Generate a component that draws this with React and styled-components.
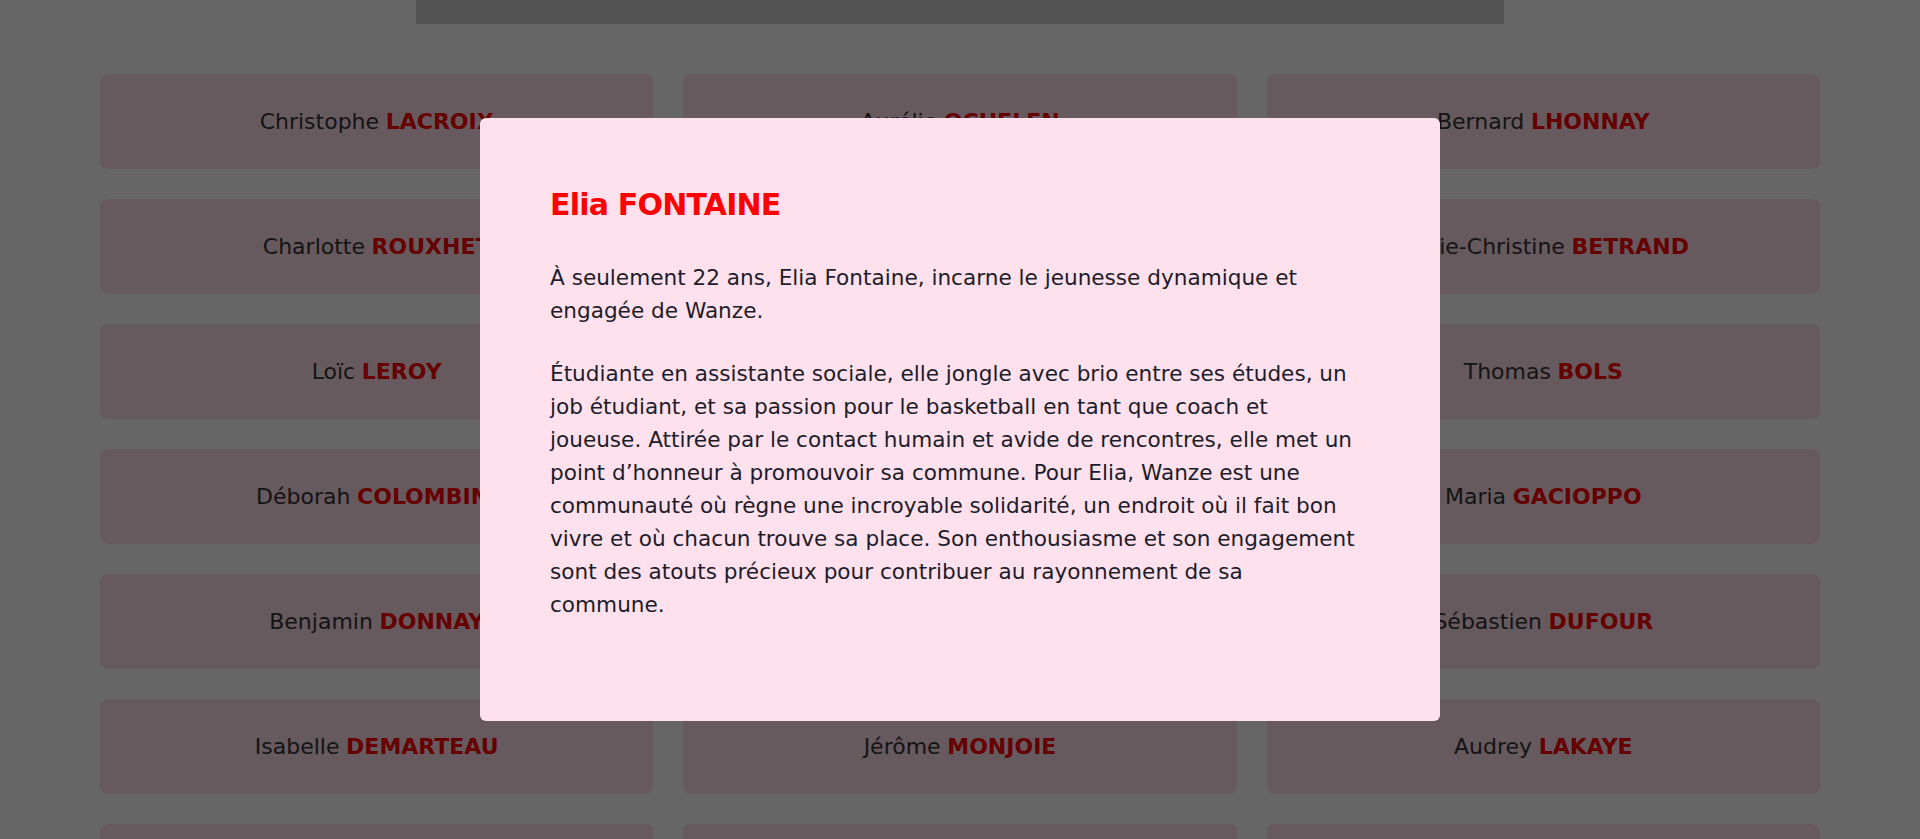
import React from 'react'
import styled, { createGlobalStyle } from 'styled-components'

const GlobalStyle = createGlobalStyle`
    * {
        box-sizing: border-box;
    }

    body {
        margin: 0;
        background: #ffffff;
        font-family: 'DejaVu Sans', 'Liberation Sans', sans-serif;
        overflow: hidden;
    }
`

const Page = styled.div`
    position: relative;
    min-height: 839px;
`

const Banner = styled.div`
    width: 1088px;
    height: 24px;
    margin: 0 auto;
    background: #cdcdcd;
`

const Grid = styled.div`
    display: grid;
    grid-template-columns: repeat(3, 1fr);
    grid-column-gap: 30px;
    grid-row-gap: 30px;
    padding: 50px 100px;
`

const Card = styled.div`
    display: flex;
    align-items: center;
    justify-content: center;
    height: 95px;
    border-radius: 8px;
    background: #ffe1ee;
    color: #333333;
    font-size: 22px;
    cursor: pointer;

    strong {
        margin-left: 0.3em;
        color: #ff0000;
        font-weight: 700;
    }
`

const Overlay = styled.div`
    position: fixed;
    inset: 0;
    display: flex;
    align-items: center;
    justify-content: center;
    background: rgba(0, 0, 0, 0.6);
`

const Modal = styled.div`
    width: 960px;
    padding: 70px;
    border-radius: 6px;
    background: #ffe1ee;
    color: #1c1c2a;

    h2 {
        margin: 0 0 39px;
        font-size: 30px;
        line-height: 34px;
        letter-spacing: -0.8px;
        font-weight: 700;
        color: #ff0000;
    }

    p {
        max-width: 810px;
        margin: 0 0 30px;
        font-size: 21.6px;
        line-height: 33px;
    }
`

const members = [
    ['Christophe', 'LACROIX'],
    ['Aurélie', 'OCHELEN'],
    ['Bernard', 'LHONNAY'],
    ['Charlotte', 'ROUXHET'],
    ['Elia', 'FONTAINE'],
    ['Marie-Christine', 'BETRAND'],
    ['Loïc', 'LEROY'],
    ['Eric', 'GUILLAUME'],
    ['Thomas', 'BOLS'],
    ['Déborah', 'COLOMBINI'],
    ['Julie', 'JAMAR'],
    ['Maria', 'GACIOPPO'],
    ['Benjamin', 'DONNAY'],
    ['Pierre', 'MATHIEU'],
    ['Sébastien', 'DUFOUR'],
    ['Isabelle', 'DEMARTEAU'],
    ['Jérôme', 'MONJOIE'],
    ['Audrey', 'LAKAYE'],
    ['Nathalie', 'DUBOIS'],
    ['Michel', 'RENARD'],
    ['Valérie', 'HENRARD'],
]

const App = () => {
    return (
        <Page>
            <GlobalStyle />
            <Banner />
            <Grid>
                {members.map(([first, last]) => (
                    <Card key={first + last}>
                        {first}
                        <strong>{last}</strong>
                    </Card>
                ))}
            </Grid>
            <Overlay>
                <Modal>
                    <h2>Elia FONTAINE</h2>
                    <p>
                        À seulement 22 ans, Elia Fontaine, incarne le jeunesse
                        dynamique et engagée de Wanze.
                    </p>
                    <p>
                        Étudiante en assistante sociale, elle jongle avec brio
                        entre ses études, un job étudiant, et sa passion pour
                        le basketball en tant que coach et joueuse. Attirée par
                        le contact humain et avide de rencontres, elle met un
                        point d’honneur à promouvoir sa commune. Pour Elia,
                        Wanze est une communauté où règne une incroyable
                        solidarité, un endroit où il fait bon vivre et où
                        chacun trouve sa place. Son enthousiasme et son
                        engagement sont des atouts précieux pour contribuer au
                        rayonnement de sa commune.
                    </p>
                </Modal>
            </Overlay>
        </Page>
    )
}

export default App
